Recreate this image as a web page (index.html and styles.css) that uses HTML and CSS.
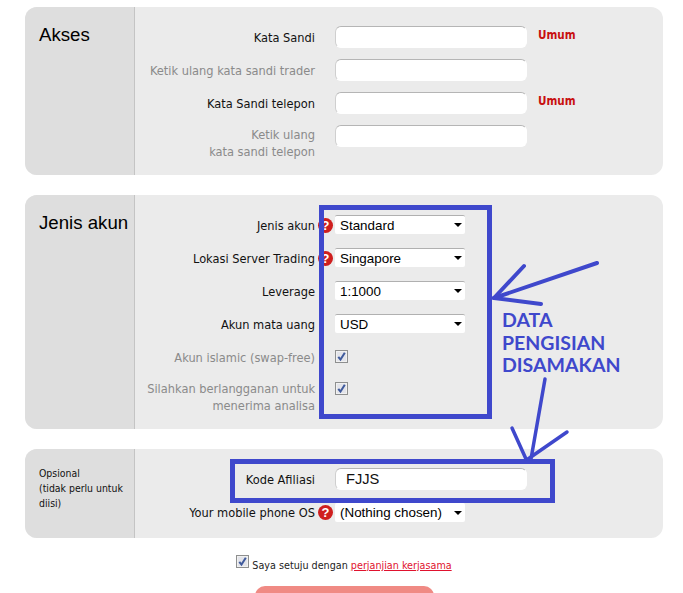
FILE: index.html
```html
<!DOCTYPE html>
<html lang="id">
<head>
<meta charset="utf-8">
<title>Akses</title>
<link rel="stylesheet" href="styles.css">
</head>
<body>
<svg class="defs" width="0" height="0" aria-hidden="true">
  <symbol id="check" viewBox="0 0 13 13">
    <rect x=".5" y=".5" width="12" height="12" fill="#d9dbe2" stroke="#8e8f8f"/>
    <rect x="1.5" y="1.5" width="10" height="10" fill="#e3e4ea" stroke="#f1f1f1"/>
    <path d="M3.3 6.8 5.5 9.6 9.8 2.8" fill="none" stroke="#3f5a9c" stroke-width="2"/>
  </symbol>
</svg>
<main class="page">
  <section class="panel panel-access">
    <h2 class="side side-title">Akses</h2>
    <div class="fields">
      <div class="row"><label class="label">Kata Sandi</label><span></span><span class="control"><input class="text" type="text"></span><b class="hint">Umum</b></div>
      <div class="row"><label class="label muted">Ketik ulang kata sandi trader</label><span></span><span class="control"><input class="text" type="text"></span></div>
      <div class="row"><label class="label">Kata Sandi telepon</label><span></span><span class="control"><input class="text" type="text"></span><b class="hint">Umum</b></div>
      <div class="row row-tall"><label class="label muted">Ketik ulang<br>kata sandi telepon</label><span></span><span class="control"><input class="text" type="text"></span></div>
    </div>
  </section>

  <section class="panel panel-account">
    <h2 class="side side-title">Jenis akun</h2>
    <div class="fields">
      <div class="row"><label class="label">Jenis akun</label><span class="help">?</span><span class="select-wrap"><select class="select"><option>Standard</option></select></span></div>
      <div class="row"><label class="label">Lokasi Server Trading</label><span class="help">?</span><span class="select-wrap"><select class="select"><option>Singapore</option></select></span></div>
      <div class="row"><label class="label">Leverage</label><span></span><span class="select-wrap"><select class="select"><option>1:1000</option></select></span></div>
      <div class="row"><label class="label">Akun mata uang</label><span></span><span class="select-wrap"><select class="select"><option>USD</option></select></span></div>
      <div class="row"><label class="label muted">Akun islamic (swap-free)</label><span></span><svg class="check check-disabled"><use href="#check"/></svg></div>
      <div class="row row-tall"><label class="label muted">Silahkan berlangganan untuk<br>menerima analisa</label><span></span><svg class="check check-disabled"><use href="#check"/></svg></div>
    </div>
  </section>

  <section class="panel panel-optional">
    <div class="side side-note">Opsional<br>(tidak perlu untuk<br>diisi)</div>
    <div class="fields">
      <div class="row"><label class="label">Kode Afiliasi</label><span></span><span class="control"><input class="text text-filled" type="text" value="FJJS"></span></div>
      <div class="row"><label class="label">Your mobile phone OS</label><span class="help">?</span><span class="select-wrap"><select class="select"><option>(Nothing chosen)</option></select></span></div>
    </div>
  </section>

  <p class="agree"><svg class="check check-agree"><use href="#check"/></svg><span>Saya setuju dengan <a href="#" class="link">perjanjian kerjasama</a></span></p>
  <button class="submit" type="button" aria-label="Kirim"></button>

  <div class="mark mark-select"></div>
  <div class="mark mark-code"></div>
  <svg class="arrows" width="683" height="593" viewBox="0 0 683 593" aria-hidden="true">
    <g fill="none" stroke="#3f48cc" stroke-linecap="round" stroke-width="4">
      <path d="M597 263 494 298"/>
      <path d="M524 266 494 298"/>
      <path d="M494 298 541 304"/>
      <path d="M545 379 531 459" stroke-width="3.5"/>
      <path d="M512 428 526 459" stroke-width="3.5"/>
      <path d="M567 432 528 459" stroke-width="3.5"/>
    </g>
  </svg>
  <div class="note">DATA<br>PENGISIAN<br>DISAMAKAN</div>
</main>
</body>
</html>
```
FILE: styles.css
```css
* { box-sizing: border-box; }
html, body { margin: 0; height: 593px; overflow: hidden; background: #fff; }
body { font-family: "DejaVu Sans Condensed", "DejaVu Sans", sans-serif; font-stretch: condensed; font-size: 12.7px; color: #111; }
.defs { position: absolute; }
.page { position: relative; height: 593px; padding: 7px 20px 0 25px; overflow: hidden; }

.panel { display: flex; width: 638px; background: #ebebeb; border-radius: 12px; overflow: hidden; margin-bottom: 20px; }
.panel-access { height: 168px; }
.panel-account { height: 234px; }
.panel-optional { height: 89px; }

.side { flex: none; width: 110px; margin: 0; padding-left: 14px; background: #dedede; border-right: 1px solid #c4c4c4; font-weight: normal; }
.side-title { padding-top: 17px; font-family: "Liberation Sans", sans-serif; font-stretch: normal; font-size: 18.67px; line-height: 22px; color: #000; }
.side-note { padding-top: 17px; font-size: 10.4px; line-height: 15px; }

.fields { flex: 1; padding-top: 19px; }
.panel-account .fields { padding-top: 20px; }
.row { display: grid; grid-template-columns: 180px 20px 192px 1fr; align-items: center; min-height: 22px; margin-bottom: 11px; }
.row-tall { align-items: start; }
.label { text-align: right; line-height: 17px; }
.row-tall .label { margin-top: 1px; }
.panel-account .label { margin-top: -2px; }
.panel-account .row-tall .label { margin-top: 0; }
.muted { color: #8a8a8a; }

.control { display: block; height: 22px; }
.text { display: block; width: 192px; height: 22px; padding: 0 10px; border: 1px solid #fff; border-top-color: #b5b5b5; border-left-color: #cfcfcf; border-radius: 6px; background: #fff; font: 13px "Liberation Sans", sans-serif; color: #111; }
.text-filled { font-size: 14.67px; }
.hint { padding-left: 11px; color: #c80f0f; font-size: 11.6px; margin-top: -4px; }

.select-wrap { position: relative; display: block; width: 130px; height: 19px; grid-column: 3; justify-self: start; align-self: start; }
.panel-optional .select-wrap { margin-top: 2px; }
.select { display: block; width: 130px; height: 19px; padding: 0 16px 0 5px; appearance: none; border: 0; border-top: 1px solid #b0b0b0; border-radius: 2px; background: #fff; font: 13.4px "Liberation Sans", sans-serif; color: #000; }
.panel-optional .select { padding-bottom: 2px; border-top-color: #fff; }
.select-wrap::after { content: ""; position: absolute; right: 3px; top: 8px; border: 4px solid transparent; border-top: 4px solid #000; border-bottom: 0; pointer-events: none; }

.help { justify-self: center; width: 15px; height: 15px; margin: -2px 0 0 1px; border-radius: 50%; background: #cf1f1f; color: #fff; font: bold 13px/15px "Liberation Sans", sans-serif; text-align: center; }
.panel-optional .help { margin-top: 1px; }
.check { display: block; width: 13px; height: 13px; }
.check-disabled { grid-column: 3; margin-top: -4px; }
.row-tall .check-disabled { margin-top: 2px; }

.agree { display: flex; align-items: center; justify-content: center; gap: 3px; margin: 3px 0 0; padding: 0; font-size: 10.7px; color: #222; line-height: 14px; height: 16px; width: 638px; }
.check-agree { flex: none; align-self: flex-start; margin-top: -3px; }
.link { color: #e0122e; }

.submit { display: block; width: 179px; height: 30px; margin: 12px 0 0 230px; padding: 0; border: 0; border-radius: 10px 10px 0 0; background: #f08a84; }

.mark { position: absolute; border: 5px solid #3f48cc; pointer-events: none; }
.mark-select { left: 319px; top: 205px; width: 173px; height: 214px; }
.mark-code { left: 230px; top: 459px; width: 325px; height: 44px; }
.arrows { position: absolute; left: 0; top: 0; pointer-events: none; }
.note { position: absolute; left: 502px; top: 309px; font: bold 19.5px/22.5px "Lato", sans-serif; font-stretch: normal; color: #3f48cc; }
```
